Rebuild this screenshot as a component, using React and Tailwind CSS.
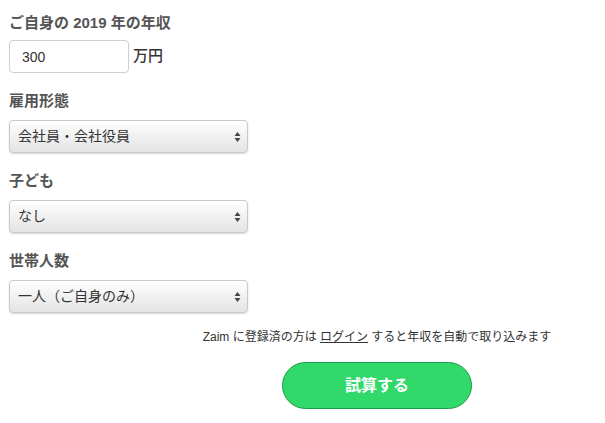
import React, { useState } from 'react';

const Arrows = () => (
  <svg width="7" height="11" viewBox="0 0 7 11" className="pointer-events-none absolute right-[7px] top-1/2 -translate-y-1/2">
    <path d="M3.5 0.5 L6.5 4.5 L0.5 4.5 Z" fill="#444" />
    <path d="M3.5 10.5 L6.5 6.5 L0.5 6.5 Z" fill="#444" />
  </svg>
);

const SelectBox = ({ value, onChange, options }) => (
  <div className="relative w-[239px] h-[33px]">
    <select
      value={value}
      onChange={(e) => onChange(e.target.value)}
      className="appearance-none w-full h-full rounded-[4px] border border-[#c9c9c9] bg-gradient-to-b from-[#ffffff] to-[#e3e3e3] pl-[8px] pr-6 text-[14px] text-[#333] shadow-[0_1px_2px_rgba(0,0,0,0.15)] outline-none"
    >
      {options.map((o) => (
        <option key={o} value={o}>{o}</option>
      ))}
    </select>
    <Arrows />
  </div>
);

const Label = ({ children }) => (
  <div className="text-[15px] font-bold text-[#555] leading-[20px]">{children}</div>
);

const App = () => {
  const [income, setIncome] = useState("300")
  const [job, setJob] = useState("会社員・会社役員")
  const [kids, setKids] = useState("なし")
  const [family, setFamily] = useState("一人（ご自身のみ）")

  return (
    <div
      className="w-[605px] h-[423px] bg-white pl-[9px] pt-[13px]"
      style={{ fontFamily: '"Helvetica Neue", "Liberation Sans", "Noto Sans CJK JP", sans-serif' }}
    >
      {/* 年収 */}
      <Label>ご自身の 2019 年の年収</Label>
      <div className="flex items-center gap-[4px] mt-[7px]">
        <input
          type="text"
          value={income}
          onChange={(e) => setIncome(e.target.value)}
          className="w-[120px] h-[33px] rounded-[4px] border border-[#cfcfcf] px-[12px] text-[14px] text-[#333] outline-none"
        />
        <span className="text-[15px] font-medium text-[#333]">万円</span>
      </div>

      <div className="mt-[18px]">
        <Label>雇用形態</Label>
      </div>
      <div className="mt-[9px]">
        <SelectBox value={job} onChange={setJob} options={["会社員・会社役員", "公務員", "自営業", "パート・アルバイト"]} />
      </div>

      <div className="mt-[18px]">
        <Label>子ども</Label>
      </div>
      <div className="mt-[9px]">
        <SelectBox value={kids} onChange={setKids} options={["なし", "1人", "2人", "3人以上"]} />
      </div>

      <div className="mt-[18px]">
        <Label>世帯人数</Label>
      </div>
      <div className="mt-[9px]">
        <SelectBox value={family} onChange={setFamily} options={["一人（ご自身のみ）", "二人", "三人", "四人以上"]} />
      </div>

      {/* login note + submit */}
      <div className="ml-[194px] w-[348px] mt-[16px] flex flex-col items-center">
        <p className="text-[12px] text-[#333] leading-[16px] whitespace-nowrap">
          Zaim に登録済の方は <a href="#" className="underline">ログイン</a> すると年収を自動で取り込みます
        </p>
        <button
          type="button"
          className="mt-[17px] w-[190px] h-[47px] rounded-full bg-[#30d96a] border border-[#1f9a45] text-white text-[16px] font-bold"
        >
          試算する
        </button>
      </div>
    </div>
  );
};

export default App;
